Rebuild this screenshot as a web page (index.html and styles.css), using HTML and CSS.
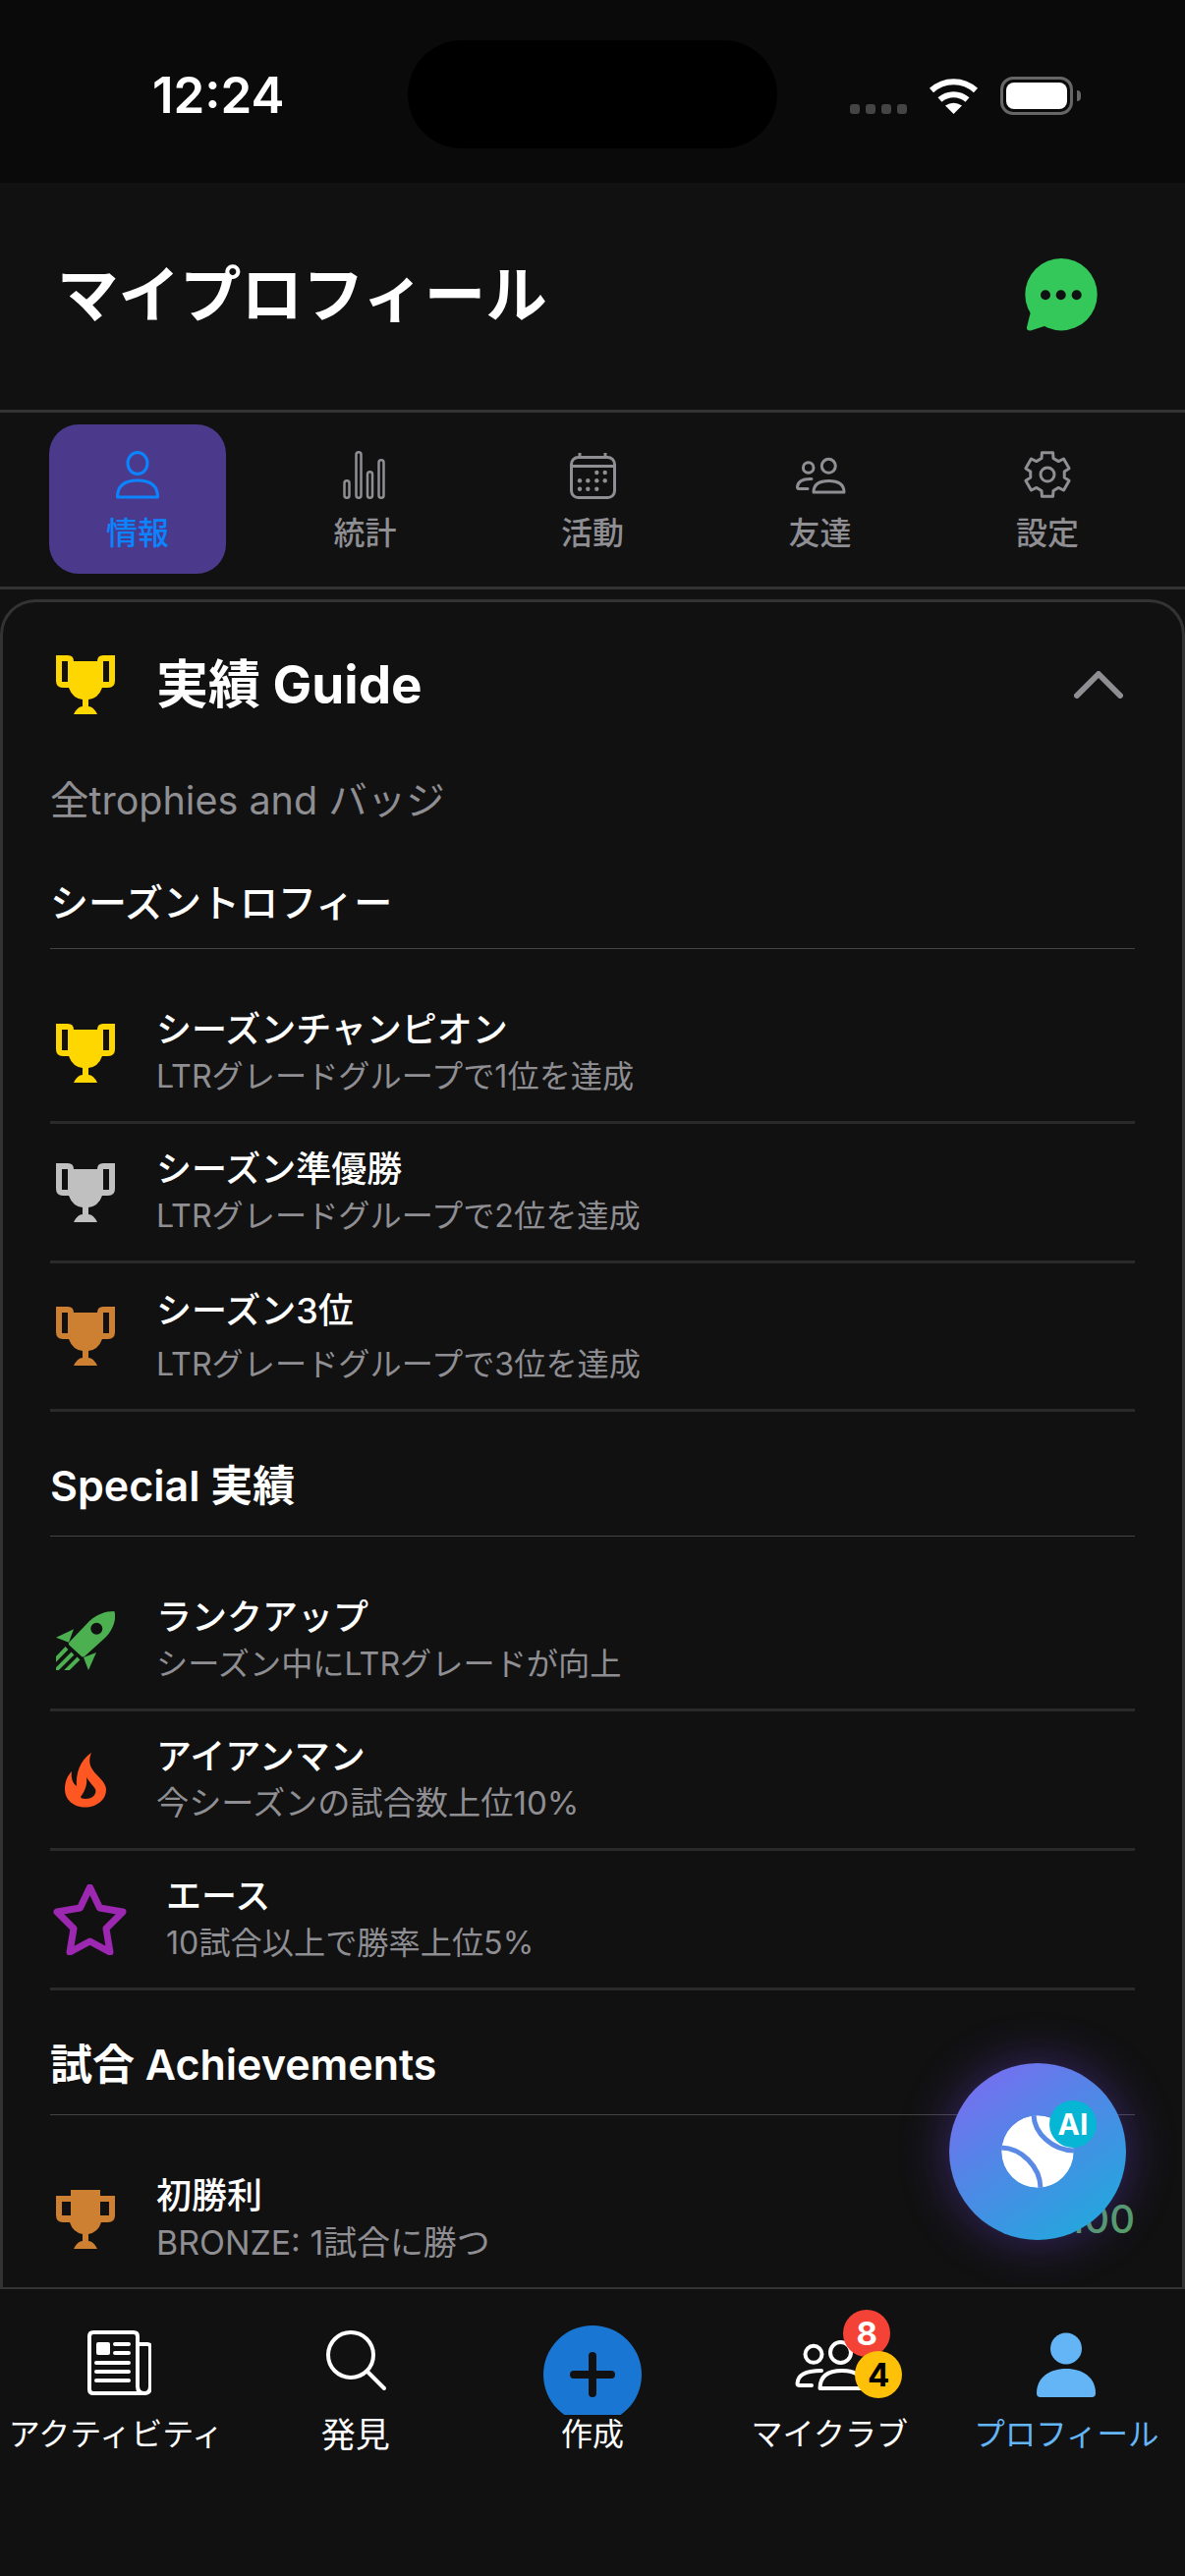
FILE: index.html
```html
<!DOCTYPE html>
<html lang="ja">
<head>
<meta charset="utf-8">
<title>マイプロフィール</title>
<link rel="stylesheet" href="styles.css">
</head>
<body>
<svg class="sprite" xmlns="http://www.w3.org/2000/svg">
  <symbol id="trophy" viewBox="0 0 60 60"><path fill-rule="evenodd" d="M0 0H12Q18 0 18 6H42Q42 0 48 0H60V26Q60 33 53 33H47Q43 44 33 45V52Q38 52 42 60H18Q22 52 27 52V45Q17 44 13 33H7Q0 33 0 26ZM6 6V27H12V6ZM48 6V27H54V6Z"/></symbol>
  <symbol id="trophy-flat" viewBox="0 0 60 60"><path fill-rule="evenodd" d="M15 0H45V6H60V26Q60 33 53 33H46Q43 43 33 45V52Q38 52 42 60H18Q22 52 27 52V45Q17 43 14 33H7Q0 33 0 26V6H15ZM6 12V26H15V12ZM45 12V26H54V12Z"/></symbol>
</svg>
<div class="screen">
  <div class="status">
    <div class="time">12:24</div>
    <div class="island"></div>
    <div class="signal"><i></i><i></i><i></i><i></i></div>
    <svg class="wifi" viewBox="0 0 51 37" fill="none" stroke="#fff" stroke-width="6"><path d="M3 13A33 33 0 0 1 48 13"/><path d="M11.500 22.500A21 21 0 0 1 39.500 22.500"/><path d="M25.500 37L17 28.500Q25.500 23 34 28.500Z" fill="#fff" stroke="none"/></svg>
    <div class="battery"><div class="battery-fill"></div></div>
    <div class="battery-nub"></div>
  </div>

  <header class="header">
    <h1 class="page-title">マイプロフィール</h1>
    <svg class="chat" viewBox="0 0 80 80"><circle cx="40" cy="39.700" r="36.700" fill="#34c759"/><path d="M9.300 56L5 73Q4.500 77 9 76.500L26 71Z" fill="#34c759"/><g fill="#111"><circle cx="24" cy="40.300" r="5"/><circle cx="39.700" cy="40.300" r="5"/><circle cx="55.700" cy="40.300" r="5"/></g></svg>
  </header>

  <nav class="tabs">
    <div class="tab tab-active">
      <svg class="tab-icon" viewBox="0 0 60 60" fill="none" stroke="currentColor" stroke-width="3" stroke-linejoin="round"><ellipse cx="30" cy="17.500" rx="10" ry="11"/><path d="M9.500 52Q9.500 35 30 35Q50.500 35 50.500 52Z"/></svg>
      <span class="tab-label">情報</span>
    </div>
    <div class="tab">
      <svg class="tab-icon" viewBox="0 0 60 60" fill="none" stroke="currentColor" stroke-width="2.500"><rect x="8.500" y="35.250" width="5" height="17.500" rx="2.500"/><rect x="20.500" y="6.250" width="5" height="46.500" rx="2.500"/><rect x="32" y="26.250" width="5" height="26.500" rx="2.500"/><rect x="43.500" y="14.250" width="5" height="38.500" rx="2.500"/></svg>
      <span class="tab-label">統計</span>
    </div>
    <div class="tab">
      <svg class="tab-icon" viewBox="0 0 60 60" fill="none" stroke="currentColor" stroke-width="3"><rect x="8.500" y="11.500" width="44" height="41" rx="7"/><path d="M8.500 20.500H52.500M17 7V11M43 7V11"/><g fill="currentColor" stroke="none"><circle cx="34.300" cy="27" r="2.200"/><circle cx="42.700" cy="27" r="2.200"/><circle cx="17" cy="35.300" r="2.200"/><circle cx="25.300" cy="35.300" r="2.200"/><circle cx="34.300" cy="35.300" r="2.200"/><circle cx="42.700" cy="35.300" r="2.200"/><circle cx="17" cy="43.700" r="2.200"/><circle cx="25.300" cy="43.700" r="2.200"/><circle cx="34.300" cy="43.700" r="2.200"/></g></svg>
      <span class="tab-label">活動</span>
    </div>
    <div class="tab">
      <svg class="tab-icon" viewBox="0 0 60 60" fill="none" stroke="currentColor" stroke-width="3" stroke-linejoin="round" stroke-linecap="round"><circle cx="17.700" cy="22" r="5.300"/><circle cx="38.300" cy="20.300" r="7"/><path d="M23 47Q23 35.500 38.500 35.500Q54 35.500 54 47Z"/><path d="M21 33.500Q7 33 6.500 42Q6.500 43.500 8 43.500H17"/></svg>
      <span class="tab-label">友達</span>
    </div>
    <div class="tab">
      <svg class="tab-icon" viewBox="-30 -29 60 60" fill="none" stroke="currentColor" stroke-width="3" stroke-linejoin="round"><path d="M-5.560 -22.320L5.560 -22.320L5.990 -16.440L11.250 -13.410L16.540 -15.980L22.110 -6.340L17.230 -3.040L17.230 3.040L22.110 6.340L16.540 15.980L11.250 13.410L5.990 16.440L5.560 22.320L-5.560 22.320L-5.990 16.440L-11.250 13.410L-16.540 15.980L-22.110 6.340L-17.230 3.040L-17.230 -3.040L-22.110 -6.340L-16.540 -15.980L-11.250 -13.410L-5.990 -16.440Z"/><circle r="7"/></svg>
      <span class="tab-label">設定</span>
    </div>
  </nav>

  <main class="card">
    <div class="card-head">
      <svg class="icon gold"><use href="#trophy"/></svg>
      <h2 class="card-title">実績 Guide</h2>
      <svg class="chevron" viewBox="0 0 50 28" fill="none" stroke="#8e8e93" stroke-width="6" stroke-linecap="round" stroke-linejoin="round"><path d="M3 25L25 3L47 25"/></svg>
    </div>
    <p class="card-sub">全trophies and バッジ</p>

    <h3 class="section-head section-first">シーズントロフィー</h3>
    <div class="rows">
      <div class="row">
        <svg class="icon gold"><use href="#trophy"/></svg>
        <div class="row-text"><div class="row-title">シーズンチャンピオン</div><div class="row-sub">LTRグレードグループで1位を達成</div></div>
      </div>
      <div class="row">
        <svg class="icon silver"><use href="#trophy"/></svg>
        <div class="row-text"><div class="row-title">シーズン準優勝</div><div class="row-sub">LTRグレードグループで2位を達成</div></div>
      </div>
      <div class="row row-tall">
        <svg class="icon bronze"><use href="#trophy"/></svg>
        <div class="row-text"><div class="row-title">シーズン3位</div><div class="row-sub">LTRグレードグループで3位を達成</div></div>
      </div>
    </div>

    <h3 class="section-head">Special 実績</h3>
    <div class="rows">
      <div class="row">
        <svg class="icon" viewBox="0 0 60 60" fill="#4caf50"><path d="M59 0C50 0 42 3 34 10L13 32Q12.500 34 14 35L26 46Q27 47 29 46L50 27C57 20 61 10 60 3Q60 0 59 0ZM41.300 11.700A6 6 0 1 0 41.301 23.700A6 6 0 1 0 41.300 11.700Z" fill-rule="evenodd"/><path d="M0 26.700L18 18.300L13 31.700ZM28 47L41 42L33 60Z"/><path d="M11 37.500L-2 51M17 43L-3 63M23 48L9 62" stroke="#4caf50" stroke-width="4" fill="none"/></svg>
        <div class="row-text"><div class="row-title">ランクアップ</div><div class="row-sub">シーズン中にLTRグレードが向上</div></div>
      </div>
      <div class="row">
        <svg class="icon" viewBox="0 0 60 60" fill="#ff5722"><path fill-rule="evenodd" d="M36 2C32 12 35 18 42 25C48 31 51 35 51 40C51 50 41 57.500 30 57.500C18 57.500 9 50 9 39C9 31 12 25 16 21C15 28 17 33 21 36C20 24 24 10 36 2ZM31 27C32 34 30 40 25 47C25 48 27 49 30 49C37 49 42 44 40 39C38 36 34 32 31 27Z"/></svg>
        <div class="row-text"><div class="row-title">アイアンマン</div><div class="row-sub sub-large">今シーズンの試合数上位10%</div></div>
      </div>
      <div class="row">
        <svg class="icon-star" viewBox="0 0 75 72" fill="none" stroke="#9c27b0" stroke-width="7" stroke-linejoin="round"><path d="M37.500 3L47.500 24L71 28L54 45L58 69L37.500 58L17 69L21 45L4 28L27.500 24Z"/></svg>
        <div class="row-text"><div class="row-title">エース</div><div class="row-sub">10試合以上で勝率上位5%</div></div>
      </div>
    </div>

    <h3 class="section-head">試合 Achievements</h3>
    <div class="rows">
      <div class="row">
        <svg class="icon bronze"><use href="#trophy-flat"/></svg>
        <div class="row-text"><div class="row-title">初勝利</div><div class="row-sub sub-xlarge">BRONZE: 1試合に勝つ</div></div>
        <div class="points">100</div>
      </div>
    </div>
  </main>

  <div class="fab">
    <svg class="ball" viewBox="0 0 74 74"><circle cx="37" cy="37" r="36.700" fill="#fff"/><path d="M33 -1C33 18 52 36 75 36" fill="none" stroke="#5b8ae6" stroke-width="5"/><path d="M-1 33C20 33 40 52 40 75" fill="none" stroke="#5b8ae6" stroke-width="5"/></svg>
    <span class="ai-badge">AI</span>
  </div>

  <footer class="bottom">
    <div class="bottom-item">
      <div class="bottom-icon">
        <svg class="bottom-svg" viewBox="0 0 66 66" fill="none" stroke="#fff" stroke-width="4" stroke-linecap="round" stroke-linejoin="round"><path d="M3 6Q3 2 7 2H48Q52 2 52 6V57Q52 64 59 64H7Q3 64 3 60Z"/><path d="M52 14H62Q65 14 65 17V57Q65 64 59 64"/><rect x="10" y="12" width="14" height="13" rx="2" fill="#fff" stroke="none"/><path d="M29 14H43M29 23H43M10 33H43M10 42H43M10 51H43"/></svg>
      </div>
      <span class="bottom-label label-shift">アクティビティ</span>
    </div>
    <div class="bottom-item">
      <div class="bottom-icon">
        <svg class="bottom-svg" viewBox="0 0 66 66" fill="none" stroke="#fff" stroke-width="4" stroke-linecap="round"><circle cx="28" cy="25" r="23"/><path d="M45 42L62 59"/></svg>
      </div>
      <span class="bottom-label label-wide">発見</span>
    </div>
    <div class="bottom-item">
      <div class="create-clip">
        <div class="create"><svg class="plus" viewBox="0 0 46 46" fill="none" stroke="#111" stroke-width="8" stroke-linecap="round"><path d="M4 23H42M23 4V42"/></svg></div>
      </div>
      <span class="bottom-label">作成</span>
    </div>
    <div class="bottom-item">
      <div class="bottom-icon">
        <div class="group">
          <svg class="group-svg" viewBox="0 0 76 66" fill="none" stroke="#fff" stroke-width="4" stroke-linecap="round" stroke-linejoin="round"><circle cx="22" cy="24.300" r="8.500"/><circle cx="49.500" cy="22.500" r="10.500"/><path d="M28.500 59Q28.500 41 51 41Q73 41 73 59Z"/><path d="M30 41Q6 41 5.500 54Q5.500 56 8 56H20"/></svg>
          <span class="badge badge-red">8</span>
          <span class="badge badge-yellow">4</span>
        </div>
      </div>
      <span class="bottom-label">マイクラブ</span>
    </div>
    <div class="bottom-item">
      <div class="bottom-icon">
        <svg class="bottom-svg profile-svg" viewBox="0 0 66 66" fill="#64b5f6"><circle cx="33" cy="16.500" r="16"/><path d="M3 62C3 46 16 37 33 37C50 37 63 46 63 62Q63 66 59 66H7Q3 66 3 62Z"/></svg>
      </div>
      <span class="bottom-label label-active">プロフィール</span>
    </div>
  </footer>
</div>
</body>
</html>
```
FILE: styles.css
```css
* { box-sizing: border-box; }
html, body { margin: 0; padding: 0; }
body {
  width: 1206px;
  height: 2622px;
  overflow: hidden;
  background: #111;
  color: #fff;
  font-family: Inter, "Noto Sans CJK JP", sans-serif;
}
.sprite { display: none; }
.screen {
  position: relative;
  display: flex;
  flex-direction: column;
  width: 1206px;
  height: 2622px;
}

/* status bar */
.status {
  display: flex;
  flex: none;
  height: 186px;
  background: #0a0a0a;
  padding-left: 155px;
}
.time {
  width: 260px;
  margin-top: 67px;
  font-size: 51px;
  line-height: 60px;
  font-weight: 600;
}
.island {
  width: 376px;
  height: 110px;
  margin-top: 41px;
  border-radius: 55px;
  background: #000;
}
.signal {
  display: flex;
  gap: 6px;
  margin: 106px 0 0 74px;
}
.signal i {
  width: 10px;
  height: 10px;
  border-radius: 3px;
  background: #444;
}
.wifi {
  width: 51px;
  height: 37px;
  margin: 79px 0 0 22px;
}
.battery {
  width: 74px;
  height: 39px;
  margin: 78px 0 0 22px;
  padding: 3px;
  border: 3px solid #666;
  border-radius: 13px;
}
.battery-fill {
  width: 100%;
  height: 100%;
  border-radius: 8px;
  background: #fff;
}
.battery-nub {
  width: 4px;
  height: 11px;
  margin: 92px 0 0 4px;
  border-radius: 0 4px 4px 0;
  background: #666;
}

/* page header */
.header {
  display: flex;
  flex: none;
  align-items: center;
  justify-content: space-between;
  height: 234px;
  padding: 0 86px 3px 58px;
  border-bottom: 3px solid #333;
}
.page-title {
  margin: 0;
  font-size: 62.5px;
  line-height: 80px;
  font-weight: 700;
}
.chat { width: 80px; height: 80px; }

/* tabs */
.tabs {
  display: flex;
  flex: none;
  justify-content: space-between;
  height: 180px;
  padding: 12px 50px 13px;
  border-bottom: 3px solid #333;
}
.tab {
  display: flex;
  flex-direction: column;
  align-items: center;
  width: 180px;
  height: 152px;
  padding-top: 22px;
  border-radius: 30px;
  color: #8e8e93;
}
.tab-active { background: #4b3a8c; color: #0a84ff; }
.tab-icon { width: 60px; height: 60px; flex: none; }
.tab-label { font-size: 32px; line-height: 58px; font-weight: 500; }

/* card */
.card {
  flex: 1;
  min-height: 0;
  overflow: hidden;
  margin-top: 10px;
  padding: 0 48px;
  border: 3px solid #333;
  border-bottom: 0;
  border-radius: 36px 36px 0 0;
}
.card-head {
  display: flex;
  align-items: center;
  height: 60px;
  margin-top: 54px;
  padding-left: 6px;
}
.icon { flex: none; width: 60px; height: 60px; margin-right: 42px; }
.gold { fill: #ffd700; }
.silver { fill: #c0c0c0; }
.bronze { fill: #cd7f32; }
.card-title {
  flex: 1;
  margin: 0;
  font-size: 53px;
  line-height: 60px;
  font-weight: 700;
}
.chevron { width: 50px; height: 28px; margin-right: 12px; }
.card-sub {
  margin: 63px 0 0;
  font-size: 39.5px;
  line-height: 50px;
  color: #8e8e93;
}
.section-head {
  margin: 45px 0 34px;
  padding-bottom: 21px;
  border-bottom: 1px solid #444;
  font-size: 43px;
  line-height: 60px;
  font-weight: 600;
}
.section-first { margin-top: 54px; line-height: 50px; font-size: 39px; font-weight: 500; }

.row {
  display: flex;
  align-items: center;
  padding: 22px 0 22px 6px;
  border-bottom: 3px solid #2a2a2a;
}
.row:first-child { padding-top: 24px; }
.rows:last-child .row { border-bottom: 0; }
.row-title { font-size: 36px; line-height: 48px; font-weight: 500; }
.row-sub { font-size: 32.2px; line-height: 47px; color: #8e8e93; }
.sub-large { font-size: 33.2px; }
.sub-xlarge { font-size: 33.9px; }
.row-tall .row-title { line-height: 52px; }
.row-tall .row-sub { line-height: 58px; }
.row-tall { padding-bottom: 16px; }
.row-tall .icon { margin-bottom: 6px; }
.icon-star { flex: none; width: 75px; height: 72px; margin: 0 40px 0 -3px; }
.points {
  margin-left: auto;
  font-size: 40px;
  font-weight: 500;
  color: #54a065;
}

/* floating button */
.fab {
  position: absolute;
  right: 60px;
  bottom: 342px;
  display: flex;
  align-items: center;
  justify-content: center;
  width: 180px;
  height: 180px;
  border-radius: 50%;
  background: linear-gradient(145deg, #8168f2 0%, #4f88e6 45%, #19aedb 100%);
  box-shadow: 0 0 50px rgba(124, 77, 255, 0.38);
}
.ball { width: 74px; height: 74px; border-radius: 50%; }
.ai-badge {
  position: absolute;
  left: 102px;
  top: 38px;
  width: 48px;
  height: 48px;
  border-radius: 50%;
  background: #06b6d4;
  text-align: center;
  font-size: 30px;
  line-height: 48px;
  font-weight: 700;
}

/* bottom bar */
.bottom {
  display: flex;
  flex: none;
  height: 294px;
  padding-top: 42px;
  background: #111;
  border-top: 2px solid #333;
  position: relative;
}
.bottom-item {
  display: flex;
  flex: 1;
  flex-direction: column;
  align-items: center;
}
.bottom-icon { height: 86px; }
.bottom-svg { display: block; width: 66px; height: 66px; }
.profile-svg { margin-top: 2px; }
.bottom-label { font-size: 32px; line-height: 40px; }
.label-shift { margin-right: 5px; }
.label-wide { font-size: 35px; }
.label-active { color: #64b5f6; font-size: 31.5px; }
.create-clip { height: 91px; margin-top: -5px; overflow: hidden; }
.create {
  display: flex;
  align-items: center;
  justify-content: center;
  width: 100px;
  height: 100px;
  border-radius: 50%;
  background: #1976d2;
}
.plus { width: 46px; height: 46px; }
.group { position: relative; width: 76px; height: 66px; }
.group-svg { display: block; width: 76px; height: 66px; }
.badge {
  position: absolute;
  width: 48px;
  height: 48px;
  border-radius: 50%;
  text-align: center;
  font-size: 33px;
  line-height: 48px;
  font-weight: 700;
}
.badge-red { left: 52px; top: -21px; background: #f44336; color: #fff; }
.badge-yellow { left: 64px; top: 21px; background: #ffc107; color: #000; }
```
